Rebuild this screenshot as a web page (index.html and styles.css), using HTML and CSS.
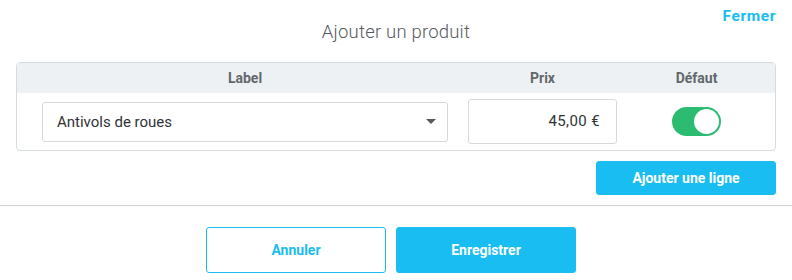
FILE: index.html
```html
<!DOCTYPE html>
<html lang="fr">
<head>
<meta charset="utf-8">
<title>Ajouter un produit</title>
<link rel="stylesheet" href="styles.css">
</head>
<body>
<div class="modal">
  <div class="modal-head">
    <span></span>
    <h1 class="title">Ajouter un produit</h1>
    <a class="close" href="#">Fermer</a>
  </div>
  <div class="table">
    <div class="row head-row">
      <div class="c-label">Label</div>
      <div class="c-price">Prix</div>
      <div class="c-def">Défaut</div>
    </div>
    <div class="row body-row">
      <div class="c-label select">
        <span>Antivols de roues</span>
        <span class="caret"></span>
      </div>
      <div class="c-price input">45,00 €</div>
      <div class="c-def"><span class="toggle"><span class="knob"></span></span></div>
    </div>
  </div>
  <div class="add-row">
    <button class="btn btn-primary btn-add">Ajouter une ligne</button>
  </div>
  <div class="sep"></div>
  <div class="footer">
    <button class="btn btn-outline">Annuler</button>
    <button class="btn btn-primary btn-save">Enregistrer</button>
  </div>
</div>
</body>
</html>
```

FILE: styles.css
```css
* { box-sizing: border-box; }
html, body { margin: 0; background: #fff; }
body { font-family: Roboto, "Open Sans", sans-serif; color: #333; }

.modal { width: 792px; height: 280px; }

.modal-head {
  display: grid;
  grid-template-columns: 1fr auto 1fr;
  align-items: start;
  height: 62px;
}
.title {
  margin: 21px 0 0;
  font-size: 18.5px;
  font-weight: 300;
  color: #555a5e;
  letter-spacing: 0.2px;
}
.close {
  justify-self: end;
  margin: 7px 16px 0 0;
  font-size: 15.5px;
  font-weight: 700;
  color: #19bdf1;
  text-decoration: none;
  letter-spacing: 0.6px;
}

.table {
  margin: 0 16px;
  border: 1px solid #d6dbdf;
  border-radius: 4px;
  overflow: hidden;
}
.row { display: flex; align-items: center; padding-left: 25px; }
.head-row {
  height: 30px;
  background: #edf1f4;
  font-size: 14px;
  font-weight: 700;
  color: #62676b;
}
.head-row > div { text-align: center; }
.body-row { height: 57px; }

.c-label { width: 406px; }
.c-price { width: 149px; margin-left: 20px; }
.c-def { width: 49px; margin-left: 55px; display: flex; justify-content: center; }

.select {
  height: 40px;
  border: 1px solid #d4d9dd;
  border-radius: 3px;
  display: flex;
  align-items: center;
  justify-content: space-between;
  padding: 0 10px 0 14px;
  font-size: 15px;
  color: #2f3336;
}
.caret {
  width: 0; height: 0;
  border-left: 5px solid transparent;
  border-right: 5px solid transparent;
  border-top: 5px solid #55595c;
  margin-right: 1px;
}
.input {
  height: 45px;
  border: 1px solid #d4d9dd;
  border-radius: 3px;
  display: flex;
  align-items: center;
  justify-content: flex-end;
  padding-right: 16px;
  font-size: 15px;
  color: #2f3336;
  margin-top: -1px;
  letter-spacing: 0.4px;
}
.toggle {
  width: 49px; height: 29px;
  border-radius: 15px;
  background: #2bbc72;
  display: flex;
  align-items: center;
  justify-content: flex-end;
  padding-right: 2px;
}
.knob {
  width: 25px; height: 25px;
  border-radius: 50%;
  background: #fff;
}

.btn {
  font-family: inherit;
  font-size: 14px;
  font-weight: 700;
  border-radius: 3px;
  cursor: pointer;
}
.btn-primary { background: #19bdf1; border: 1px solid #19bdf1; color: #fff; }
.btn-outline { background: #fff; border: 1px solid #19bdf1; color: #19bdf1; }

.add-row { display: flex; justify-content: flex-end; padding: 10px 16px 0 0; }
.btn-add { width: 180px; height: 34px; }

.sep { height: 1px; background: #d2d2d2; margin-top: 10px; }

.footer {
  display: flex;
  justify-content: center;
  gap: 10px;
  padding: 21px 10px 0 0;
}
.footer .btn { width: 180px; height: 46px; }
```
